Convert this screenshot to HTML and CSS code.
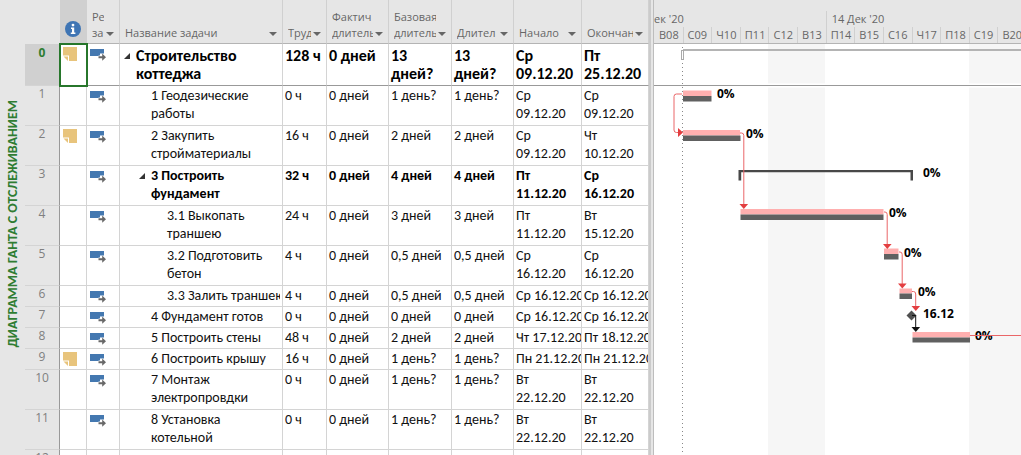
FILE: index.html
```html
<!DOCTYPE html>
<html lang="ru">
<head>
<meta charset="utf-8">
<title>Диаграмма Ганта с отслеживанием</title>
<link rel="stylesheet" href="styles.css">
</head>
<body>
<svg class="defs" aria-hidden="true">
  <symbol id="mode" viewBox="0 0 16 12">
    <path d="M0 0h14v4.500h-4v2H8.500V7H0z" fill="#4478b0"/>
    <path d="M8.500 7.200h3.700V4.500l3.800 3.700-3.800 3.600V9.300H8.500z" fill="#686868"/>
  </symbol>
  <symbol id="note" viewBox="0 0 14 14">
    <path d="M0 0h14v14H6V8.500H0z" fill="#e8c47c"/>
    <path d="M.500 9.500H5V14z" fill="#e8c47c"/>
  </symbol>
</svg>
<main class="app">
  <aside class="side"><span class="side-title">ДИАГРАММА ГАНТА С ОТСЛЕЖИВАНИЕМ</span></aside>
  <table class="tasks">
    <colgroup>
      <col class="c-num"><col class="c-info"><col class="c-mode"><col class="c-name"><col class="c-work"><col class="c-fact"><col class="c-base"><col class="c-dur"><col class="c-start"><col class="c-end">
    </colgroup>
    <thead>
      <tr>
        <th class="corner"></th>
        <th class="info"><svg class="i-icon" viewBox="0 0 16 16" role="img" aria-label="Индикаторы"><circle cx="8" cy="8" r="8" fill="#3f75b4"/><circle cx="8" cy="4.1" r="1.4" fill="#fff"/><path d="M6 6.500h3.200v5h1.200V13H5.800v-1.500H7V8H6z" fill="#fff"/></svg></th>
        <th><div class="head"><span>Ре<br>за</span><button class="drop" aria-label="Фильтр: режим задачи"></button></div></th>
        <th><div class="head"><span>Название задачи</span><button class="drop" aria-label="Фильтр: название"></button></div></th>
        <th><div class="head"><span>Труд</span><button class="drop" aria-label="Фильтр: трудозатраты"></button></div></th>
        <th><div class="head"><span>Фактич<br>длителы</span><button class="drop" aria-label="Фильтр: фактическая длительность"></button></div></th>
        <th><div class="head"><span>Базовая<br>длителы</span><button class="drop" aria-label="Фильтр: базовая длительность"></button></div></th>
        <th><div class="head"><span>Длител</span><button class="drop" aria-label="Фильтр: длительность"></button></div></th>
        <th><div class="head"><span>Начало</span><button class="drop" aria-label="Фильтр: начало"></button></div></th>
        <th><div class="head"><span>Окончан</span><button class="drop" aria-label="Фильтр: окончание"></button></div></th>
      </tr>
    </thead>
    <tbody>
      <tr class="project"><th>0</th><td class="ic picked"><svg class="note"><use href="#note"/></svg></td><td class="ic"><svg class="mode"><use href="#mode"/></svg></td><td><div class="name l0"><button class="fold" aria-label="Свернуть"></button>Строительство<br>коттеджа</div></td><td>128 ч</td><td>0 дней</td><td>13<br>дней?</td><td>13<br>дней?</td><td>Ср<br>09.12.20</td><td>Пт<br>25.12.20</td></tr>
      <tr class="tall"><th>1</th><td></td><td class="ic"><svg class="mode"><use href="#mode"/></svg></td><td><div class="name l1">1 Геодезические<br>работы</div></td><td>0 ч</td><td>0 дней</td><td>1 день?</td><td>1 день?</td><td>Ср<br>09.12.20</td><td>Ср<br>09.12.20</td></tr>
      <tr class="tall"><th>2</th><td class="ic"><svg class="note"><use href="#note"/></svg></td><td class="ic"><svg class="mode"><use href="#mode"/></svg></td><td><div class="name l1">2 Закупить<br>стройматериалы</div></td><td>16 ч</td><td>0 дней</td><td>2 дней</td><td>2 дней</td><td>Ср<br>09.12.20</td><td>Чт<br>10.12.20</td></tr>
      <tr class="tall summary"><th>3</th><td></td><td class="ic"><svg class="mode"><use href="#mode"/></svg></td><td><div class="name l1"><button class="fold" aria-label="Свернуть"></button>3 Построить<br>фундамент</div></td><td>32 ч</td><td>0 дней</td><td>4 дней</td><td>4 дней</td><td>Пт<br>11.12.20</td><td>Ср<br>16.12.20</td></tr>
      <tr class="tall"><th>4</th><td></td><td class="ic"><svg class="mode"><use href="#mode"/></svg></td><td><div class="name l2">3.1 Выкопать<br>траншею</div></td><td>24 ч</td><td>0 дней</td><td>3 дней</td><td>3 дней</td><td>Пт<br>11.12.20</td><td>Вт<br>15.12.20</td></tr>
      <tr class="tall"><th>5</th><td></td><td class="ic"><svg class="mode"><use href="#mode"/></svg></td><td><div class="name l2">3.2 Подготовить<br>бетон</div></td><td>4 ч</td><td>0 дней</td><td>0,5 дней</td><td>0,5 дней</td><td>Ср<br>16.12.20</td><td>Ср<br>16.12.20</td></tr>
      <tr class="short"><th>6</th><td></td><td class="ic"><svg class="mode"><use href="#mode"/></svg></td><td><div class="name l2">3.3 Залить траншею</div></td><td>4 ч</td><td>0 дней</td><td>0,5 дней</td><td>0,5 дней</td><td>Ср 16.12.20</td><td>Ср 16.12.20</td></tr>
      <tr class="short"><th>7</th><td></td><td class="ic"><svg class="mode"><use href="#mode"/></svg></td><td><div class="name l1">4 Фундамент готов</div></td><td>0 ч</td><td>0 дней</td><td>0 дней</td><td>0 дней</td><td>Ср 16.12.20</td><td>Ср 16.12.20</td></tr>
      <tr class="short"><th>8</th><td></td><td class="ic"><svg class="mode"><use href="#mode"/></svg></td><td><div class="name l1">5 Построить стены</div></td><td>48 ч</td><td>0 дней</td><td>2 дней</td><td>2 дней</td><td>Чт 17.12.20</td><td>Пт 18.12.20</td></tr>
      <tr class="short"><th>9</th><td class="ic"><svg class="note"><use href="#note"/></svg></td><td class="ic"><svg class="mode"><use href="#mode"/></svg></td><td><div class="name l1">6 Построить крышу</div></td><td>16 ч</td><td>0 дней</td><td>1 день?</td><td>1 день?</td><td>Пн 21.12.20</td><td>Пн 21.12.20</td></tr>
      <tr class="tall"><th>10</th><td></td><td class="ic"><svg class="mode"><use href="#mode"/></svg></td><td><div class="name l1">7 Монтаж<br>электропровдки</div></td><td>0 ч</td><td>0 дней</td><td>1 день?</td><td>1 день?</td><td>Вт<br>22.12.20</td><td>Вт<br>22.12.20</td></tr>
      <tr class="tall"><th>11</th><td></td><td class="ic"><svg class="mode"><use href="#mode"/></svg></td><td><div class="name l1">8 Установка<br>котельной</div></td><td>0 ч</td><td>0 дней</td><td>1 день?</td><td>1 день?</td><td>Вт<br>22.12.20</td><td>Вт<br>22.12.20</td></tr>
      <tr class="short"><th>12</th><td></td><td></td><td></td><td></td><td></td><td></td><td></td><td></td><td></td></tr>
    </tbody>
  </table>
  <div class="splitter"></div>
  <section class="chart">
    <header class="scale">
      <div class="weeks"><span class="prev">ек '20</span><span class="week">14 Дек '20</span></div>
      <div class="days"><span>В08</span><span>С09</span><span>Ч10</span><span>П11</span><span>С12</span><span>В13</span><span>П14</span><span>В15</span><span>С16</span><span>Ч17</span><span>П18</span><span>С19</span><span>В20</span></div>
    </header>
    <svg class="gantt">
      <rect class="weekend" x="114" y="0" width="57" height="100%"/>
      <rect class="weekend" x="315" y="0" width="57" height="100%"/>
      <path d="M0 41.500H2000" stroke="#fff" stroke-width="4"/>
      <path d="M0 41.500H2000" stroke="#999"/>
      <path d="M28.500 3V2000" stroke="#888" stroke-dasharray="1 3"/>
      <path d="M29 6H2000" stroke="#b4b4b4" stroke-width="2"/>
      <rect x="27.500" y="6.500" width="2" height="9" fill="#fff" stroke="#aaa"/>
      <path class="plan" d="M29 46.500h28.500v5.500H29zM29 86h57v5.500H29zM86.500 165h143v5.500h-143zM230 204.500h14.500v5.500H230zM245.500 244.500H258v5h-12.500zM258.500 288H316v5.500h-57.500z"/>
      <path class="base" d="M29 52h28.500v5.500H29zM29 91.500h57.500V97H29zM86.500 170.500h143v5.500h-143zM230 210h14.500v5.500H230zM245.500 249.500H258v5.500h-12.500zM258.500 293.500H316v5h-57.500z"/>
      <path d="M84.500 126H259v10.500h-2.500V128.200H87.200v8.300h-2.700z" fill="#484848"/>
      <path d="M257.500 266.500l5 5-5 5-5-5z" fill="#505050"/>
      <path class="links" d="M28 50h-5.500q-2.500 0-2.500 2.500V86q0 2.500 2.500 2.500H25M86 89h1.500q2.300 0 2.300 2.500V161M230 168h1q2.200 0 2.200 2.500V201M245 208h1q2.200 0 2.200 2.500V240M258 247.500h1.500q2.200 0 2.200 2.500v13"/>
      <path d="M24 84l5 4.500-5 4.500zM85.500 160h8.600l-4.300 5zM229 200h8.600l-4.300 5zM244 239.500h8.600l-4.300 5zM257.500 262h8.600l-4.300 5z" fill="#e33e40"/>
      <path d="M258 271.500h3.700V284" fill="none" stroke="#111"/>
      <path d="M257.500 283h8.600l-4.300 5z" fill="#111"/>
      <g class="labels">
        <text x="63" y="54">0%</text>
        <text x="92" y="94">0%</text>
        <text x="269" y="133">0%</text>
        <text x="235" y="173">0%</text>
        <text x="250" y="213">0%</text>
        <text x="264" y="252">0%</text>
        <text x="269" y="274">16.12</text>
        <text x="321" y="296">0%</text>
      </g>
      <path class="links" d="M316 291.500h2000"/>
    </svg>
  </section>
</main>
</body>
</html>
```

FILE: styles.css
```css
* { box-sizing: border-box; }

body {
  margin: 0;
  background: #fff;
  color: #111;
  font: 14px/18px Carlito, Lato, "Open Sans", sans-serif;
}

button {
  margin: 0;
  padding: 0;
  border: 0;
  background: none;
}

.defs { display: none; }

.app {
  display: flex;
  align-items: stretch;
  height: 100vh;
  overflow: hidden;
}

.side {
  flex: 0 0 25px;
  display: flex;
  align-items: center;
  justify-content: center;
  padding-bottom: 8px;
  background: #e6e6e6;
}

.side-title {
  writing-mode: vertical-rl;
  transform: rotate(180deg);
  white-space: nowrap;
  color: #2f7d32;
  font-weight: 600;
}

.tasks {
  flex: 0 0 auto;
  align-self: flex-start;
  width: 624px;
  table-layout: fixed;
  border-collapse: separate;
  border-spacing: 0;
}

.c-num { width: 35px; }
.c-info { width: 27px; }
.c-mode { width: 33px; }
.c-name { width: 163px; }
.c-work { width: 44px; }
.c-fact { width: 62px; }
.c-base { width: 63px; }
.c-dur { width: 62px; }
.c-start { width: 68px; }
.c-end { width: 67px; }

thead th {
  height: 44px;
  padding: 0 0 2px 5px;
  vertical-align: bottom;
  background: #e6e6e6;
  border-right: 1px solid #d0d0d0;
  border-bottom: 1px solid #b4b4b4;
  color: #666;
  font: 11px/16px "Open Sans", "Noto Sans", sans-serif;
  text-align: left;
}

thead .corner { border-right-color: #e6e6e6; border-bottom-color: #e6e6e6; }

thead .info {
  padding: 0 0 6px;
  background: #d0d0d0;
  text-align: center;
}

.i-icon { display: block; width: 16px; height: 16px; margin: 0 auto; }

.head {
  display: flex;
  align-items: flex-end;
  gap: 2px;
}

.head span {
  flex: 1;
  overflow: hidden;
  white-space: nowrap;
}

.drop {
  flex: 0 0 8px;
  height: 4px;
  margin: 0 5px 5px 0;
  background: #666;
  clip-path: polygon(0 0, 100% 0, 50% 100%);
}

tbody td {
  padding: 1px 0 0 2px;
  border-right: 1px solid #d4d4d4;
  border-bottom: 1px solid #d4d4d4;
  vertical-align: top;
  white-space: nowrap;
  overflow: hidden;
}

tbody th {
  padding: 0;
  background: #e6e6e6;
  border-right: 1px solid #999;
  border-bottom: 1px solid #d4d4d4;
  vertical-align: top;
  color: #808080;
  font: 12px/16px "Open Sans", "Noto Sans", sans-serif;
}

.project { height: 42px; font-size: 16px; font-weight: 700; color: #000; }
.project td { padding-top: 3px; border-bottom-color: #999; }
.project th { background: #d0d0d0; color: #2f7d32; font-weight: 700; line-height: 18px; }
.tall { height: 40px; }
.short { height: 21px; }
.summary { font-weight: 700; color: #000; }

tbody .picked { outline: 2px solid #27762b; outline-offset: -1px; }
tbody .ic { padding: 3px 0 0 3px; }

.note { display: block; width: 14px; height: 14px; }
.mode { display: block; width: 16px; height: 12px; margin-top: 2px; }

.name { overflow: hidden; margin-right: 2px; }
.l0 { padding-left: 14px; }
.l1 { padding-left: 29px; }
.l2 { padding-left: 45px; }

.fold {
  float: left;
  width: 6px;
  height: 6px;
  margin: 6px 6px 6px -12px;
  background: #333;
  clip-path: polygon(100% 0, 100% 100%, 0 100%);
}

.splitter {
  flex: 0 0 5px;
  background: #e6e6e6;
  border-left: 2px solid #cbcbcb;
  border-right: 1px solid #bdbdbd;
}

.chart {
  flex: 1;
  min-width: 0;
  display: flex;
  flex-direction: column;
  overflow: hidden;
}

.scale {
  flex: 0 0 44px;
  display: flex;
  flex-direction: column;
  justify-content: flex-end;
  background: #e6e6e6;
  border-bottom: 1px solid #b4b4b4;
  color: #666;
  font: 11px/16px "Open Sans", "Noto Sans", sans-serif;
}

.weeks, .days { display: grid; width: 372px; }
.weeks { grid-template-columns: 6fr 7fr; }
.days { grid-template-columns: repeat(13, 1fr); }
.week { padding-left: 5px; border-left: 1px solid #d0d0d0; }
.days span { padding-left: 4px; border-left: 1px solid #d0d0d0; }
.days span:first-child { border-left-color: transparent; }

.gantt { display: block; flex: 1; width: 100%; min-height: 0; }
.weekend { fill: #f6f6f6; }
.plan { fill: #ffafaf; }
.base { fill: #606060; }
.links { fill: none; stroke: #ea6668; stroke-width: 1; }
.labels { fill: #000; font: 700 12px "Open Sans", "Noto Sans", sans-serif; }
```
